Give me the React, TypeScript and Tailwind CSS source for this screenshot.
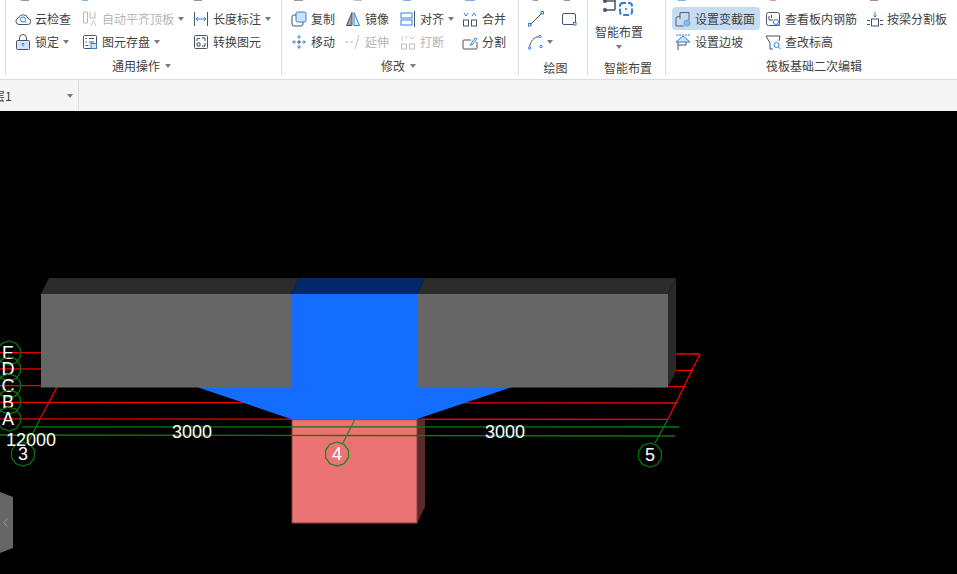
import React from "react";

const BLUE = "#2f7fe0";
const DARK = "#4b5263";

type IconProps = { children: React.ReactNode; size?: number };

const Ico = ({ children, size = 16 }: IconProps) => (
  <svg width={size} height={size} viewBox="0 0 16 16" fill="none" strokeWidth="1" className="shrink-0">
    {children}
  </svg>
);

const CloudIcon = () => (
  <Ico>
    <path d="M4 13.500h8.500a3 3 0 0 0 .5-6 5 5 0 0 0-9.500-.5A3.300 3.300 0 0 0 4 13.500z" stroke={DARK} />
    <circle cx="8" cy="8.500" r="2.500" stroke={BLUE} />
    <path d="M10 10.500l1.500 1.500" stroke={BLUE} />
  </Ico>
);
const AlignTopIcon = () => (
  <Ico>
    <path d="M1.500 1v11h4V1zM8 1v6h5V1" stroke="#b9b9b9" />
    <path d="M9 15l2.500-6 2.500 6" stroke="#c9c9c9" />
  </Ico>
);
const DimensionIcon = () => (
  <Ico>
    <path d="M1.500 1v14M14.500 1v14" stroke={DARK} />
    <path d="M3 8h10M5 6l-2 2 2 2M11 6l2 2-2 2" stroke={BLUE} />
  </Ico>
);
const LockIcon = () => (
  <Ico>
    <path d="M4.500 7V4a3.500 3.500 0 0 1 7 0v3" stroke={DARK} />
    <rect x="1.500" y="6.500" width="13" height="9" rx="1" fill="#d3e4fa" stroke={DARK} />
    <path d="M8 9v3.500M6.800 10.300L8 9l1.200 1.300" stroke={BLUE} />
  </Ico>
);
const SaveListIcon = () => (
  <Ico>
    <rect x="1.500" y="1.500" width="13" height="13" rx="1" stroke={DARK} />
    <path d="M3.500 4.500h1.500M7 4.500h5M3.500 8h1.500M7 8h5M3.500 11.500h3" stroke={DARK} />
    <rect x="9" y="9.500" width="5.500" height="5" fill="#d3e4fa" stroke={BLUE} />
  </Ico>
);
const ConvertIcon = () => (
  <Ico>
    <rect x="1.500" y="1.500" width="13" height="13" rx="1" stroke={DARK} />
    <path d="M4 7V4.500h3M9 4h3v3M4 9h3v3H4zM12 9v3H9" stroke={DARK} />
    <path d="M9 4l1.500-1M12 12l-1.500 1" stroke={BLUE} />
  </Ico>
);
const CopyIcon = () => (
  <Ico>
    <rect x="1" y="4" width="11" height="11" rx="2" stroke={DARK} />
    <rect x="5" y="1" width="10" height="10" rx="1.500" fill="#cfe2fb" stroke={BLUE} />
  </Ico>
);
const MirrorIcon = () => (
  <Ico>
    <path d="M7 1.500L1.500 14.500H7z" fill="#9aa1ad" stroke={DARK} />
    <path d="M9 1.500l5.500 13H9z" fill="#e3eefc" stroke={BLUE} />
  </Ico>
);
const AlignIcon = () => (
  <Ico>
    <rect x="1" y="2" width="11" height="5" stroke={BLUE} />
    <rect x="1" y="9" width="11" height="5" stroke={BLUE} />
    <path d="M14.500 0v16" stroke={DARK} />
  </Ico>
);
const MergeIcon = () => (
  <Ico>
    <rect x="1.500" y="9" width="5" height="6" stroke={DARK} />
    <rect x="9.500" y="9" width="5" height="6" stroke={DARK} />
    <path d="M2 2l2 3 2-3M10 5l2-3 2 3" stroke={BLUE} />
  </Ico>
);
const MoveIcon = () => (
  <Ico>
    <path d="M8 2v3M8 11v3M2 8h3M11 8h3M6.500 3.500L8 1.500l1.500 2M6.500 12.500L8 14.500l1.500-2M3.500 6.500L1.500 8l2 1.500M12.500 6.500L14.500 8l-2 1.500" stroke={BLUE} />
    <path d="M6 8h4M8 6v4" stroke={DARK} />
  </Ico>
);
const ExtendIcon = () => (
  <Ico>
    <path d="M0 8h3M5 8h3" stroke="#b5b5b5" />
    <path d="M14 1L10 15" stroke="#c4c4c4" />
  </Ico>
);
const BreakIcon = () => (
  <Ico>
    <rect x="1.500" y="10" width="5" height="5" stroke="#bdbdbd" />
    <rect x="9.500" y="10" width="5" height="5" stroke="#bdbdbd" />
    <path d="M2 2v5M7 2L5 5M10 3l2 2 2-2" stroke="#c7c7c7" />
  </Ico>
);
const SplitIcon = () => (
  <Ico>
    <path d="M15 8v6a1 1 0 0 1-1 1H2a1 1 0 0 1-1-1V7a1 1 0 0 1 1-1h7" stroke={DARK} />
    <path d="M8 11l5-7 2 1-5 6z" stroke={BLUE} />
  </Ico>
);
const LineIcon = () => (
  <Ico>
    <path d="M2.500 13.500l11-11" stroke={DARK} />
    <rect x="0.500" y="12.500" width="2.500" height="2.500" stroke={BLUE} />
    <rect x="13" y="0.500" width="2.500" height="2.500" stroke={BLUE} />
  </Ico>
);
const RectIcon = () => (
  <Ico>
    <rect x="1.500" y="2.500" width="13" height="11" rx="1.500" stroke={DARK} />
    <rect x="12.500" y="11.500" width="2.500" height="2.500" fill="#fff" stroke={BLUE} />
  </Ico>
);
const ArcIcon = () => (
  <Ico>
    <path d="M1.500 14C2 7 6 3 11 2.500" stroke={DARK} />
    <circle cx="1.500" cy="14" r="1.200" fill="#fff" stroke={BLUE} />
    <circle cx="12" cy="2.500" r="1.200" fill="#fff" stroke={BLUE} />
    <circle cx="13" cy="12.500" r="1.200" stroke={BLUE} />
  </Ico>
);
const SectionIcon = () => (
  <Ico>
    <path d="M1 15V6.500l4-1.500V1.500h9V9M1 15h8M5 5v3" stroke="#5a6270" />
    <circle cx="12" cy="12" r="3" fill="#8db8ea" stroke="#6aa0e0" />
  </Ico>
);
const SlopeIcon = () => (
  <Ico>
    <path d="M1 8l7-6 7 6z" fill="#cfe2fb" stroke={BLUE} />
    <path d="M1 1h14" stroke={BLUE} strokeDasharray="2 1" />
    <path d="M3 8v8M3 11h8V8" stroke={DARK} />
  </Ico>
);
const RebarIcon = () => (
  <Ico>
    <rect x="1.500" y="1.500" width="13" height="13" rx="2" stroke={DARK} />
    <path d="M4 9V5M4 9h4M6.500 4v3" stroke={DARK} />
    <circle cx="11" cy="11" r="2.500" fill="#fff" stroke={BLUE} />
    <path d="M13 13l2 2" stroke={BLUE} />
  </Ico>
);
const ElevationIcon = () => (
  <Ico>
    <path d="M1 2h14l-1 5M1 2l4 7v6h3" stroke={DARK} />
    <circle cx="11.500" cy="11" r="2.500" stroke={BLUE} />
    <path d="M13.500 13l2 2" stroke={BLUE} />
  </Ico>
);
const BeamSplitIcon = () => (
  <Ico>
    <rect x="4.500" y="8" width="7" height="7" stroke={DARK} />
    <path d="M0 9.500h3M0 13.500h3M13 9.500h3M13 13.500h3" stroke={DARK} />
    <path d="M8 1v5M6.500 4.500L8 6l1.500-1.500" stroke={BLUE} />
  </Ico>
);

const Caret = () => (
  <span className="w-0 h-0 border-x-[3.5px] border-t-[4px] border-x-transparent border-t-[#7b7b7b]" />
);

type ItemProps = {
  icon: React.ReactNode;
  label: string;
  caret?: boolean;
  disabled?: boolean;
  className?: string;
};

const Item = ({ icon, label, caret, disabled, className = "" }: ItemProps) => (
  <div className={`flex items-center h-[23px] ${className}`}>
    <div className="w-5 flex">{icon}</div>
    <span className={`whitespace-nowrap ${disabled ? "text-[#b5b5b5]" : "text-[#3f3f3f]"}`}>{label}</span>
    {caret && (
      <span className="ml-[4px] flex">
        <Caret />
      </span>
    )}
  </div>
);

const GroupLabel = ({ text, caret, className = "" }: { text: string; caret?: boolean; className?: string }) => (
  <div className={`flex justify-center items-center gap-[5px] h-5 text-[#3f3f3f] ${caret ? "mt-[3px]" : "mt-[5px]"} ${className}`}>
    <span>{text}</span>
    {caret && <Caret />}
  </div>
);

// bottoms of the row of buttons that is scrolled out above the ribbon
const clippedTops = [
  { x: 21, w: 8, c: DARK },
  { x: 82, w: 6, c: BLUE },
  { x: 194, w: 8, c: DARK },
  { x: 294, w: 9, c: DARK },
  { x: 354, w: 8, c: "#9a9a9a" },
  { x: 403, w: 8, c: BLUE },
  { x: 465, w: 10, c: BLUE },
  { x: 533, w: 5, c: DARK },
  { x: 564, w: 6, c: DARK },
  { x: 678, w: 8, c: BLUE },
  { x: 770, w: 6, c: "#d9534f" },
  { x: 870, w: 8, c: DARK },
];

const Ribbon = () => (
  <div className="relative flex h-[80px] pl-[5px] bg-white border-b border-[#dcdcdc] text-xs font-['Noto_Sans_CJK_SC','Liberation_Sans',sans-serif]">
    <svg width="957" height="1" className="absolute left-0 top-0 opacity-60">
      {clippedTops.map((t) => (
        <rect key={t.x} x={t.x} y="0" width={t.w} height="1" fill={t.c} />
      ))}
    </svg>

    {/* common operations */}
    <div className="w-[276px] h-[75px] pl-[9px] pt-[7px] border-l border-[#dcdcdc]">
      <div className="grid grid-cols-[67px_111px_auto]">
        <Item icon={<CloudIcon />} label="云检查" />
        <Item icon={<AlignTopIcon />} label="自动平齐顶板" caret disabled />
        <Item icon={<DimensionIcon />} label="长度标注" caret />
        <Item icon={<LockIcon />} label="锁定" caret />
        <Item icon={<SaveListIcon />} label="图元存盘" caret />
        <Item icon={<ConvertIcon />} label="转换图元" />
      </div>
      <GroupLabel text="通用操作" caret className="pr-[13px]" />
    </div>

    {/* modify */}
    <div className="w-[237px] h-[75px] pl-[9px] pt-[7px] border-l border-[#dcdcdc]">
      <div className="grid grid-cols-[54px_55px_62px_auto]">
        <Item icon={<CopyIcon />} label="复制" />
        <Item icon={<MirrorIcon />} label="镜像" />
        <Item icon={<AlignIcon />} label="对齐" caret />
        <Item icon={<MergeIcon />} label="合并" />
        <Item icon={<MoveIcon />} label="移动" />
        <Item icon={<ExtendIcon />} label="延伸" disabled />
        <Item icon={<BreakIcon />} label="打断" disabled />
        <Item icon={<SplitIcon />} label="分割" />
      </div>
      <GroupLabel text="修改" caret className="pr-[12px]" />
    </div>

    {/* draw */}
    <div className="w-[69px] h-[75px] pl-[9px] pt-[7px] border-l border-[#dcdcdc]">
      <div className="grid grid-cols-[33px_auto]">
        <div className="flex items-center h-[23px]"><LineIcon /></div>
        <div className="flex items-center h-[23px]"><RectIcon /></div>
        <div className="flex items-center gap-[3px] h-[23px] col-span-2">
          <ArcIcon />
          <Caret />
        </div>
      </div>
      <GroupLabel text="绘图" className="pr-[4px]" />
    </div>

    {/* smart layout */}
    <div className="w-[78px] h-[75px] border-l border-[#dcdcdc] flex flex-col items-start text-[#3f3f3f]">
      <svg width="31" height="16" viewBox="0 0 31 16" fill="none" className="ml-[15px] shrink-0">
        <path d="M2 1H12M2 10H12M12 0V10" stroke={DARK} strokeWidth="1.500" />
        <circle cx="2" cy="1" r="2" fill={DARK} />
        <circle cx="2" cy="10" r="2" fill={DARK} />
        <rect x="17" y="3" width="12" height="12" rx="3" stroke={BLUE} strokeWidth="2" strokeDasharray="6 2" strokeDashoffset="3" />
        <circle cx="23" cy="9" r="1" fill={BLUE} />
      </svg>
      <span className="mt-[8px] ml-[7px] leading-4 shrink-0">智能布置</span>
      <span className="mt-[5px] ml-[28px] flex shrink-0"><Caret /></span>
      <span className="mt-[9px] ml-[16px] leading-5 shrink-0">智能布置</span>
    </div>

    {/* raft secondary edit */}
    <div className="flex-1 h-[75px] pl-[6px] pt-[7px] border-l border-[#dcdcdc]">
      <div className="grid grid-cols-[93px_102px_auto]">
        <Item icon={<SectionIcon />} label="设置变截面" className="pl-[3px] w-[88px] h-[22px] rounded-sm bg-[#c5dcf3]" />
        <Item icon={<RebarIcon />} label="查看板内钢筋" />
        <Item icon={<BeamSplitIcon />} label="按梁分割板" />
        <Item icon={<SlopeIcon />} label="设置边坡" className="pl-[3px]" />
        <Item icon={<ElevationIcon />} label="查改标高" />
      </div>
      <div className="h-5 mt-[5px] pl-[94px] text-[#3f3f3f]">筏板基础二次编辑</div>
    </div>
  </div>
);

const LayerBar = () => (
  <div className="flex h-[31px] bg-[#f5f5f5] text-xs font-['Noto_Sans_CJK_SC','Liberation_Sans',sans-serif]">
    <div className="w-[79px] flex items-center justify-between pr-[5px] border-r border-[#dedede] overflow-hidden text-[#3f3f3f]">
      <span className="-ml-[7px]">层1</span>
      <Caret />
    </div>
  </div>
);

const axisRows = [
  { name: "E", y: 353 },
  { name: "D", y: 369 },
  { name: "C", y: 386 },
  { name: "B", y: 402 },
  { name: "A", y: 419 },
];

const ringPoints = (cx: number, cy: number, r: number) =>
  Array.from({ length: 10 }, (_, i) => {
    const a = (Math.PI * 2 * i) / 10 + Math.PI / 10;
    return `${(cx + r * Math.cos(a)).toFixed(1)},${(cy + r * Math.sin(a)).toFixed(1)}`;
  }).join(" ");

const Model = () => (
  <svg width="957" height="463" viewBox="0 111 957 463" className="block font-['Liberation_Sans',sans-serif]">
    {/* grid, red part: the lines drop slightly towards the right */}
    <g stroke="#f00000" strokeWidth="1.300" fill="none">
      <path d="M0 352.600L700 354M0 368.800L693 370.400M0 385.600L685 386.600M0 402.400L677 403M0 418.800L668 419.400" />
      <path d="M700 354L668 419M57 387L40 419" />
    </g>

    {/* column */}
    <polygon points="417,419 425,418 425,507 417,523" fill="#5b2b2b" />
    <rect x="292" y="419" width="125" height="104" fill="#ec7373" stroke="#8f4046" />

    {/* green axes */}
    <g stroke="#0b7a0b" strokeWidth="1.300" fill="none">
      <path d="M22 426.800L679 427M0 435L675 436" />
    </g>
    <path d="M40 419L28 443M668 419L655 443" stroke="#0b7a0b" strokeWidth="1.300" fill="none" />
    <path d="M355 419L343 443" stroke="#1e8a1e" strokeWidth="1.300" fill="none" />
    <path d="M292 419.500H417" stroke="#d0303c" strokeWidth="1.300" />

    {/* slab flare and beams */}
    <polygon points="197,387 512,387 417,419 291,419" fill="#136dff" />
    <polygon points="49,278 299,278 291,294 41,294" fill="#2b2b2b" />
    <polygon points="425,278 676,278 668,294 417,294" fill="#2b2b2b" />
    <polygon points="668,294 676,278 676,372 668,387" fill="#292929" />
    <polygon points="299,278 425,278 417,294 291,294" fill="#04296b" />
    <rect x="41" y="294" width="250" height="93.500" fill="#666666" />
    <rect x="417" y="294" width="251" height="93.500" fill="#666666" />
    <rect x="291" y="294" width="126" height="94" fill="#136dff" />

    {/* axis bubbles */}
    {axisRows.map((row) => (
      <g key={row.name}>
        <polygon points={ringPoints(9, row.y, 12)} fill="none" stroke="#0a700a" strokeWidth="1.300" />
        <text x="8" y={row.y + 6} fontSize="18" fill="#fff" textAnchor="middle">{row.name}</text>
      </g>
    ))}
    <polygon points={ringPoints(23, 454, 12)} fill="none" stroke="#0a700a" strokeWidth="1.300" />
    <polygon points={ringPoints(337, 454, 12)} fill="none" stroke="#1e8a1e" strokeWidth="1.300" />
    <polygon points={ringPoints(650, 455, 12)} fill="none" stroke="#0a700a" strokeWidth="1.300" />
    <text x="23" y="460" fontSize="18" fill="#fff" textAnchor="middle">3</text>
    <text x="337" y="460" fontSize="18" fill="#fff" textAnchor="middle">4</text>
    <text x="650" y="461" fontSize="18" fill="#fff" textAnchor="middle">5</text>

    {/* dimensions */}
    <text x="6" y="446" fontSize="18" fill="#fff">12000</text>
    <text x="172" y="438" fontSize="18" fill="#fff">3000</text>
    <text x="485" y="438" fontSize="18" fill="#fff">3000</text>
  </svg>
);

const App = () => (
  <div className="w-[957px] h-[574px] overflow-hidden flex flex-col bg-black">
    <Ribbon />
    <LayerBar />
    <div className="relative flex-1">
      <Model />
      {/* side panel handle */}
      <div className="absolute left-0 top-[381px] w-[13px] h-[61px] bg-[#666] rounded-r-[3px] [clip-path:polygon(0_0,100%_8%,100%_92%,0_100%)] flex items-center pl-[3px]">
        <svg width="5" height="9" viewBox="0 0 5 9" fill="none">
          <path d="M4.500 0.500L0.800 4.500L4.500 8.500" stroke="#9a9a9a" />
        </svg>
      </div>
    </div>
  </div>
);

export default App;
